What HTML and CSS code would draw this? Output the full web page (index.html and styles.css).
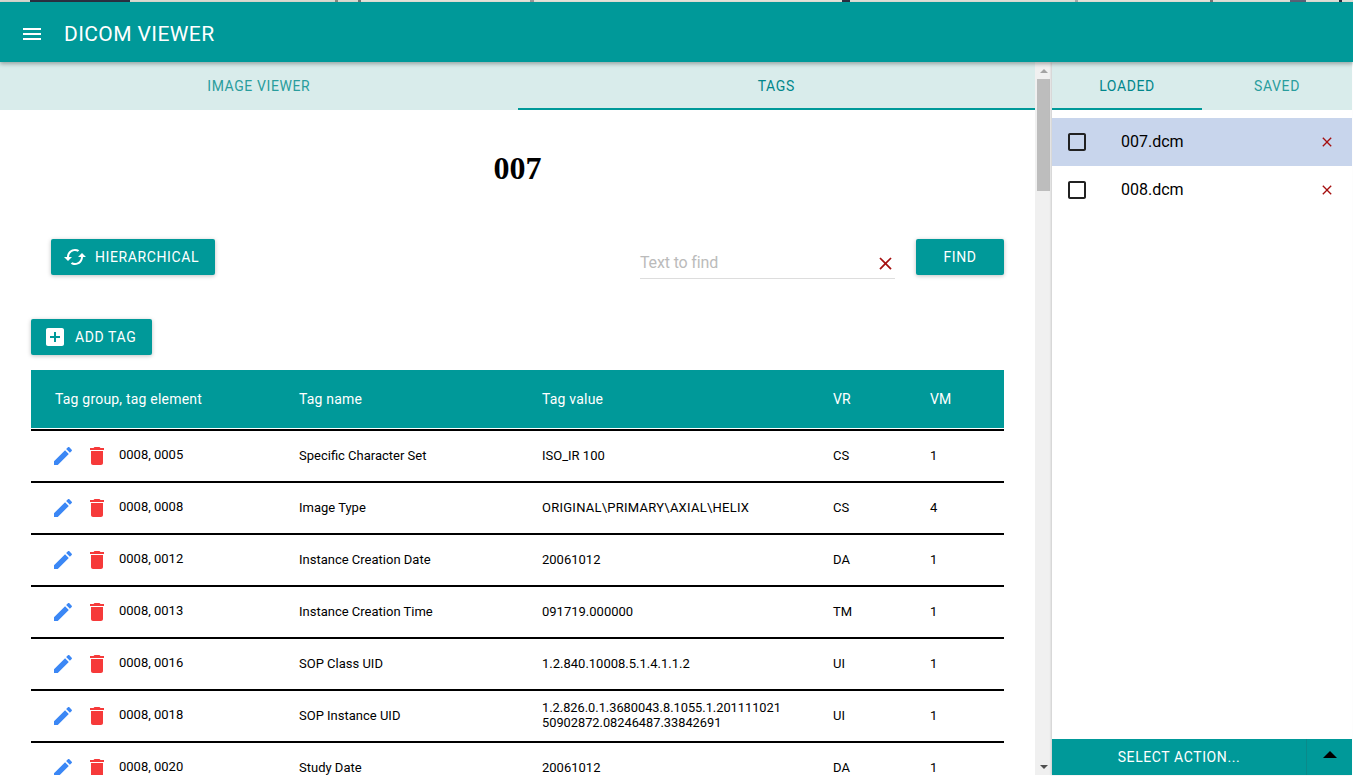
FILE: index.html
```html
<!DOCTYPE html>
<html lang="en">
<head>
    <meta charset="UTF-8">
    <meta name="viewport" content="width=device-width, initial-scale=1.0">
    <title>DICOM Viewer</title>
    <link rel="stylesheet" href="styles.css">
</head>
<body>
    <svg class="defs" width="0" height="0">
        <symbol id="i-edit" viewBox="0 0 24 24"><path d="M3 17.25V21h3.75L17.81 9.94l-3.75-3.75L3 17.25zM20.71 7.04c.39-.39.39-1.02 0-1.41l-2.34-2.34c-.39-.39-1.02-.39-1.41 0l-1.83 1.83 3.75 3.75 1.83-1.83z"/></symbol>
        <symbol id="i-delete" viewBox="0 0 24 24"><path d="M6 19c0 1.1.9 2 2 2h8c1.1 0 2-.9 2-2V7H6v12zM19 4h-3.5l-1-1h-5l-1 1H5v2h14V4z"/></symbol>
        <symbol id="i-close" viewBox="0 0 24 24"><path d="M19 6.41L17.59 5 12 10.59 6.41 5 5 6.41 10.59 12 5 17.59 6.41 19 12 13.41 17.59 19 19 17.59 13.41 12z"/></symbol>
        <symbol id="i-check" viewBox="0 0 24 24"><path d="M19 5v14H5V5h14m0-2H5c-1.1 0-2 .9-2 2v14c0 1.1.9 2 2 2h14c1.1 0 2-.9 2-2V5c0-1.1-.9-2-2-2z"/></symbol>
    </svg>

    <div class="top-strip"></div>
    <header class="toolbar">
        <svg class="menu-icon" viewBox="0 0 24 24"><path d="M3 18h18v-2H3v2zm0-5h18v-2H3v2zm0-7v2h18V6H3z"/></svg>
        <span class="app-title">DICOM VIEWER</span>
    </header>

    <div class="main">
        <section class="content">
            <nav class="tabs">
                <div class="tab">IMAGE VIEWER</div>
                <div class="tab active">TAGS</div>
            </nav>

            <h1 class="file-title">007</h1>

            <div class="controls">
                <button class="btn btn-hier">
                    <svg class="btn-icon sync" viewBox="0 0 24 24"><path d="M19 8l-4 4h3c0 3.31-2.69 6-6 6-1.01 0-1.97-.25-2.8-.7l-1.46 1.46C8.97 19.54 10.43 20 12 20c4.42 0 8-3.58 8-8h3l-4-4zM6 12c0-3.31 2.69-6 6-6 1.01 0 1.97.25 2.8.7l1.46-1.46C15.03 4.46 13.57 4 12 4c-4.42 0-8 3.58-8 8H1l4 4 4-4H6z"/></svg>
                    HIERARCHICAL
                </button>
                <div class="search">
                    <div class="search-field">
                        <span class="placeholder">Text to find</span>
                        <svg class="close-icon"><use href="#i-close"/></svg>
                    </div>
                    <button class="btn btn-find">FIND</button>
                </div>
            </div>

            <div class="add-row">
                <button class="btn btn-add">
                    <svg class="btn-icon" viewBox="0 0 24 24"><path d="M19 3H5c-1.11 0-2 .9-2 2v14c0 1.1.89 2 2 2h14c1.1 0 2-.9 2-2V5c0-1.1-.9-2-2-2zm-2 10h-4v4h-2v-4H7v-2h4V7h2v4h4v2z"/></svg>
                    ADD TAG
                </button>
            </div>

            <table class="tags">
                <colgroup>
                    <col class="c-tag"><col class="c-name"><col class="c-value"><col class="c-vr"><col class="c-vm">
                </colgroup>
                <thead>
                    <tr>
                        <th class="th-tag">Tag group, tag element</th>
                        <th>Tag name</th>
                        <th>Tag value</th>
                        <th>VR</th>
                        <th>VM</th>
                    </tr>
                </thead>
                <tbody>
                    <tr>
                        <td><div class="tag-cell"><svg class="edit"><use href="#i-edit"/></svg><svg class="trash"><use href="#i-delete"/></svg><span>0008, 0005</span></div></td>
                        <td>Specific Character Set</td><td>ISO_IR 100</td><td>CS</td><td>1</td>
                    </tr>
                    <tr>
                        <td><div class="tag-cell"><svg class="edit"><use href="#i-edit"/></svg><svg class="trash"><use href="#i-delete"/></svg><span>0008, 0008</span></div></td>
                        <td>Image Type</td><td class="caps-value">ORIGINAL\PRIMARY\AXIAL\HELIX</td><td>CS</td><td>4</td>
                    </tr>
                    <tr>
                        <td><div class="tag-cell"><svg class="edit"><use href="#i-edit"/></svg><svg class="trash"><use href="#i-delete"/></svg><span>0008, 0012</span></div></td>
                        <td>Instance Creation Date</td><td>20061012</td><td>DA</td><td>1</td>
                    </tr>
                    <tr>
                        <td><div class="tag-cell"><svg class="edit"><use href="#i-edit"/></svg><svg class="trash"><use href="#i-delete"/></svg><span>0008, 0013</span></div></td>
                        <td>Instance Creation Time</td><td>091719.000000</td><td>TM</td><td>1</td>
                    </tr>
                    <tr>
                        <td><div class="tag-cell"><svg class="edit"><use href="#i-edit"/></svg><svg class="trash"><use href="#i-delete"/></svg><span>0008, 0016</span></div></td>
                        <td>SOP Class UID</td><td>1.2.840.10008.5.1.4.1.1.2</td><td>UI</td><td>1</td>
                    </tr>
                    <tr>
                        <td><div class="tag-cell"><svg class="edit"><use href="#i-edit"/></svg><svg class="trash"><use href="#i-delete"/></svg><span>0008, 0018</span></div></td>
                        <td>SOP Instance UID</td><td class="long-value">1.2.826.0.1.3680043.8.1055.1.201111021<br>50902872.08246487.33842691</td><td>UI</td><td>1</td>
                    </tr>
                    <tr>
                        <td><div class="tag-cell"><svg class="edit"><use href="#i-edit"/></svg><svg class="trash"><use href="#i-delete"/></svg><span>0008, 0020</span></div></td>
                        <td>Study Date</td><td>20061012</td><td>DA</td><td>1</td>
                    </tr>
                </tbody>
            </table>
        </section>

        <div class="scrollbar">
            <div class="arrow arrow-up"></div>
            <div class="thumb"></div>
            <div class="track"></div>
            <div class="arrow arrow-down"></div>
        </div>

        <aside class="files">
            <nav class="tabs files-tabs">
                <div class="tab active">LOADED</div>
                <div class="tab">SAVED</div>
            </nav>
            <ul class="file-list">
                <li class="file selected">
                    <svg class="check"><use href="#i-check"/></svg>
                    <span class="file-name">007.dcm</span>
                    <svg class="file-close"><use href="#i-close"/></svg>
                </li>
                <li class="file">
                    <svg class="check"><use href="#i-check"/></svg>
                    <span class="file-name">008.dcm</span>
                    <svg class="file-close"><use href="#i-close"/></svg>
                </li>
            </ul>
            <div class="action-bar">
                <div class="action-main">SELECT ACTION...</div>
                <div class="action-toggle"><span class="caret"></span></div>
            </div>
        </aside>
    </div>
</body>
</html>
```

FILE: styles.css
```css
* {
    box-sizing: border-box;
}
html, body {
    height: 100%;
}
body {
    margin: 0;
    overflow: hidden;
    background: #fff;
    color: #000;
    font-family: Roboto, "Liberation Sans", sans-serif;
    display: flex;
    flex-direction: column;
}
.defs {
    position: absolute;
}
/* sliver of whatever was behind the window */
.top-strip {
    height: 2px;
    flex: none;
    background: linear-gradient(to right,
        #d8d8d0 0, #d8d8d0 30px,
        #2b3042 30px, #2b3042 130px,
        #dcdcd2 130px, #dcdcd2 335px,
        #8a8a80 335px, #8a8a80 338px,
        #dcdcd2 338px, #dcdcd2 358px,
        #777 358px, #777 361px,
        #e6e4da 361px, #e6e4da 530px,
        #999 530px, #999 534px,
        #e6e4da 534px, #e6e4da 842px,
        #2b3042 842px, #2b3042 850px,
        #e0e0d8 850px, #e0e0d8 1075px,
        #aaa 1075px, #aaa 1078px,
        #e6e4da 1078px, #e6e4da 1210px,
        #777 1210px, #777 1213px,
        #e0e0d8 1213px, #e0e0d8 1290px,
        #5b6478 1290px, #5b6478 1306px,
        #e0e0d8 1306px, #e0e0d8 1339px,
        #2b3042 1339px, #2b3042 1342px,
        #e0e0d8 1342px);
}
.toolbar {
    height: 60px;
    flex: none;
    display: flex;
    align-items: center;
    background: #009999;
    color: #fff;
    padding: 3px 0 0 20px;
    box-shadow: 0 2px 4px rgba(0, 0, 0, 0.3);
    position: relative;
    z-index: 2;
}
.menu-icon {
    width: 24px;
    height: 24px;
    fill: #fff;
}
.app-title {
    margin-left: 20px;
    font-size: 21px;
    font-weight: 400;
    letter-spacing: 0.4px;
}
.main {
    flex: 1;
    min-height: 0;
    display: flex;
    padding-right: 1px;
    padding-bottom: 1px;
}

/* left side */
.content {
    width: 1035px;
    flex: none;
    overflow: hidden;
}
.tabs {
    display: flex;
    height: 48px;
    background: #d9eceb;
}
.tab {
    flex: 1;
    display: flex;
    align-items: center;
    justify-content: center;
    padding-top: 2px;
    font-size: 14px;
    letter-spacing: 0.6px;
    color: #2a9d9d;
    border-bottom: 2px solid transparent;
}
.tab.active {
    color: #00868b;
    border-bottom-color: #009999;
}
.file-title {
    margin: 0;
    height: 129px;
    padding-bottom: 12px;
    display: flex;
    align-items: center;
    justify-content: center;
    font-family: "Liberation Serif", serif;
    font-size: 32px;
    font-weight: bold;
}
.btn {
    border: none;
    border-radius: 2px;
    background: #009999;
    color: #fff;
    font-family: inherit;
    font-size: 14px;
    letter-spacing: 0.6px;
    height: 36px;
    display: flex;
    align-items: center;
    padding: 0 0 0 12px;
    box-shadow: 0 1px 4px rgba(0, 0, 0, 0.25);
}
.btn-icon {
    width: 24px;
    height: 24px;
    fill: #fff;
    flex: none;
}
.controls {
    display: flex;
    justify-content: space-between;
    padding: 0 31px 0 51px;
}
.btn-hier {
    width: 164px;
    gap: 8px;
}
.search {
    display: flex;
    align-items: flex-start;
    gap: 21px;
}
.search-field {
    width: 255px;
    height: 40px;
    display: flex;
    align-items: center;
    justify-content: space-between;
    padding: 8px 0 0 0;
    border-bottom: 1px solid #ddd;
}
.placeholder {
    font-size: 16px;
    letter-spacing: -0.15px;
    color: #bbb;
}
.close-icon {
    width: 21px;
    height: 21px;
    fill: #a50f0f;
    margin: 2px -1px 0 0;
}
.btn-find {
    width: 88px;
    padding: 0;
    justify-content: center;
}
.add-row {
    padding: 40px 0 15px 31px;
}
.btn-add {
    width: 121px;
    gap: 8px;
}

/* tag table */
.tags {
    margin-left: 31px;
    width: 973px;
    table-layout: fixed;
    border-collapse: separate;
    border-spacing: 0;
    font-size: 13px;
}
.c-tag { width: 268px; }
.c-name { width: 243px; }
.c-value { width: 291px; }
.c-vr { width: 97px; }
.c-vm { width: 74px; }
.tags th {
    height: 59px;
    background: #009999;
    background-clip: padding-box;
    border-bottom: 1px solid #fff;
    color: #fff;
    font-size: 14px;
    font-weight: 400;
    letter-spacing: 0.2px;
    text-align: left;
    padding: 0;
}
.tags th.th-tag {
    padding-left: 24px;
}
.tags tbody td {
    height: 52px;
    padding: 0 0 2px;
    border-bottom: 2px solid #000;
    vertical-align: middle;
}
.tags tbody tr:first-child td {
    height: 54px;
    border-top: 2px solid #000;
}
.tag-cell {
    display: flex;
    align-items: center;
    padding-left: 20px;
}
.tag-cell span {
    margin-left: 10px;
    margin-top: -2px;
}
.edit {
    width: 24px;
    height: 24px;
    margin-top: 2px;
    fill: #3b87f5;
}
.trash {
    width: 24px;
    height: 24px;
    margin: 2px 0 0 10px;
    fill: #f63a3a;
}
.caps-value {
    letter-spacing: 0.25px;
}
.long-value {
    font-size: 12.8px;
    line-height: 15px;
}

/* fake window scrollbar */
.scrollbar {
    width: 17px;
    flex: none;
    display: flex;
    flex-direction: column;
    background: #f0f0f0;
}
.arrow {
    height: 17px;
    flex: none;
    display: flex;
    align-items: center;
    justify-content: center;
}
.arrow-up::before,
.arrow-down::before {
    content: "";
    border-left: 4px solid transparent;
    border-right: 4px solid transparent;
}
.arrow-up::before {
    border-bottom: 4px solid #a3a3a3;
}
.arrow-down::before {
    border-top: 4px solid #505050;
}
.thumb {
    height: 112px;
    margin: 0 2px;
    flex: none;
    background: #bdbdbd;
}
.track {
    flex: 1;
}

/* file panel */
.files {
    flex: 1;
    display: flex;
    flex-direction: column;
    box-shadow: -1px 0 2px rgba(0, 0, 0, 0.15);
    position: relative;
}
.files-tabs .tab {
    flex: none;
    width: 150px;
}
.files-tabs {
    flex: none;
}
.file-list {
    list-style: none;
    margin: 8px 0 0;
    padding: 0;
    flex: 1;
}
.file {
    height: 48px;
    display: flex;
    align-items: center;
    padding-left: 13px;
    font-size: 16px;
}
.file.selected {
    background: #c8d5ec;
}
.check {
    width: 24px;
    height: 24px;
    fill: #212121;
}
.file-name {
    margin: -2px 0 0 32px;
    flex: 1;
}
.file-close {
    width: 16px;
    height: 16px;
    fill: #a50f0f;
    margin-right: 17px;
}
.action-bar {
    height: 36px;
    flex: none;
    display: flex;
    background: #009999;
    color: #fff;
    font-size: 14px;
    letter-spacing: 0.6px;
}
.action-main {
    width: 255px;
    display: flex;
    align-items: center;
    justify-content: center;
    border-right: 1px solid #0a8a8a;
}
.action-toggle {
    flex: 1;
    display: flex;
    align-items: center;
    justify-content: center;
}
.caret {
    border-left: 7px solid transparent;
    border-right: 7px solid transparent;
    border-bottom: 7px solid #000;
    margin-bottom: 6px;
}
```
